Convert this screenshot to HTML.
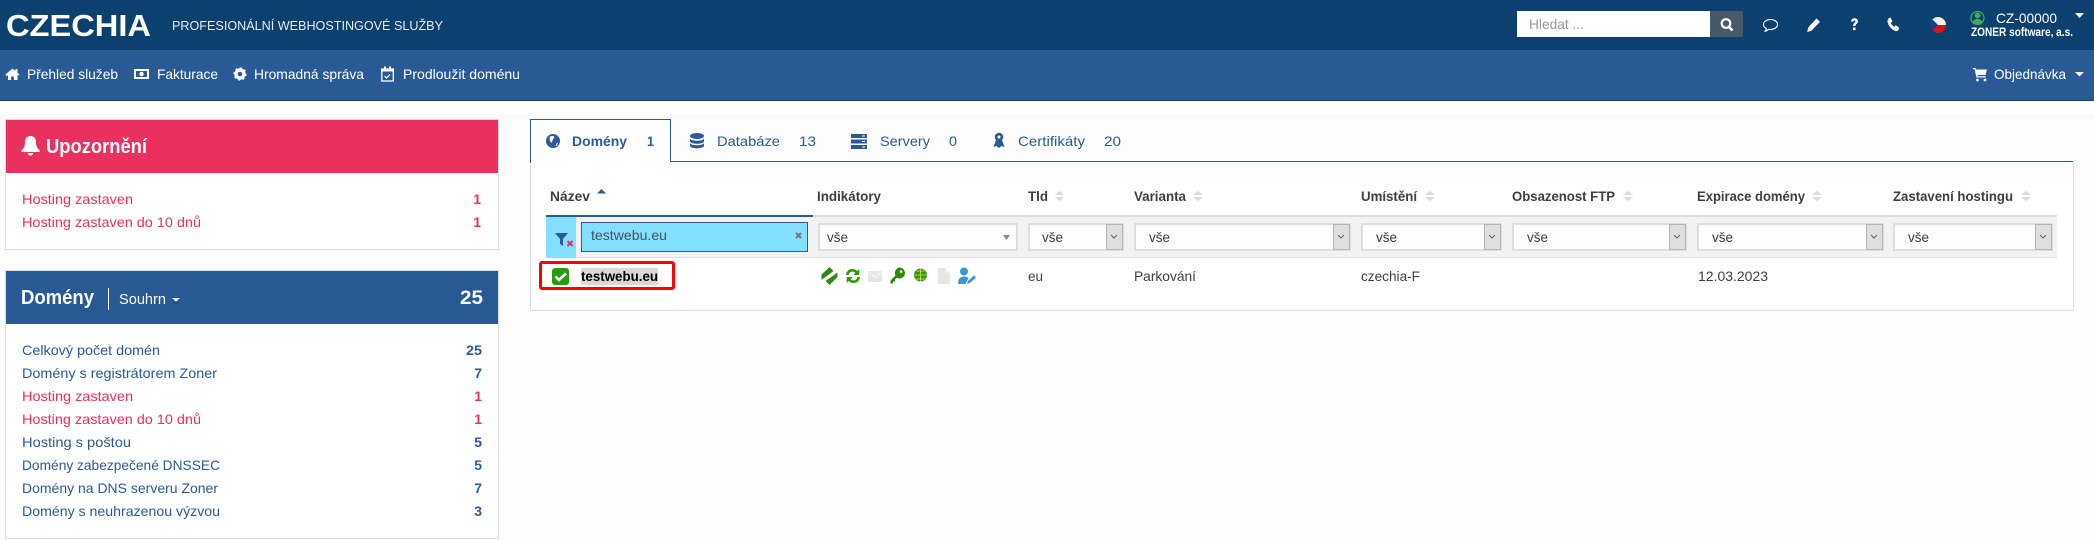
<!DOCTYPE html>
<html lang="cs"><head><meta charset="utf-8"><title>CZECHIA</title>
<style>
html,body{margin:0;padding:0;background:#fff;width:2094px;height:540px;overflow:hidden}
svg{display:block}
text{font-family:"Liberation Sans",Arial,sans-serif;font-size:14px;white-space:pre}
.w{fill:#fff}.b{fill:#2b5a96}.r{fill:#e9305e}.h{fill:#3c4045;font-weight:bold}.d{fill:#3c4045}
.n{font-weight:bold}
.sel{fill:#fcfcfc;stroke:#dedede;stroke-width:2}
.btn{fill:#dfdfdf;stroke:#b4b4b4;stroke-width:1}
.chev{fill:none;stroke:#666;stroke-width:1}
.so{fill:#dcdcdc}
</style></head><body>
<svg xmlns="http://www.w3.org/2000/svg" width="2094" height="540" viewBox="0 0 2094 540">
<rect width="2094" height="540" fill="#fcfcfc"/>
<rect y="100" width="2094" height="14" fill="#fff"/>
<!-- top bar -->
<rect width="2094" height="50" fill="#0b406f"/>
<rect y="50" width="2094" height="50" fill="#2a5a96"/>
<rect y="100" width="2094" height="1" fill="#0b406f"/>
<text x="6" y="36" class="w" style="font-size:31px;font-weight:bold" textLength="145" lengthAdjust="spacingAndGlyphs">CZECHIA</text>
<text x="172" y="30" class="w" style="font-size:13px;fill:#e4ebf3" textLength="271" lengthAdjust="spacingAndGlyphs">PROFESIONÁLNÍ WEBHOSTINGOVÉ SLUŽBY</text>
<!-- search -->
<rect x="1517" y="11" width="193" height="26" fill="#fff"/>
<text x="1529" y="29" style="fill:#999" textLength="55" lengthAdjust="spacingAndGlyphs">Hledat ...</text>
<rect x="1710" y="11" width="33" height="26" fill="#46586a"/>
<circle cx="1726" cy="23.5" r="4.3" fill="none" stroke="#fff" stroke-width="2.2"/>
<path d="M1729 27l3.5 3.5" stroke="#fff" stroke-width="2.6" fill="none"/>
<!-- top icons -->
<path d="M1770.500 19.500c4 0 7 2.200 7 5s-3 5-7 5c-.8 0-1.400-.1-2-.2-.8 1-2 1.700-3.400 1.900.7-.8 1.200-1.700 1.300-2.700-1.800-.9-2.900-2.300-2.900-4 0-2.800 3-5 7-5z" fill="none" stroke="#fff" stroke-width="1.100"/>
<path d="M1816.500 18.500l3.500 3.200-8.500 9-4.300 1.300 1-4.500z" fill="#fff"/>
<path d="M1851 21.500c.3-2.300 1.700-3.300 3.500-3.300 2 0 3.500 1.300 3.500 3.100 0 2.400-2.500 2.600-2.500 4.700h-2.400c0-3.100 2.400-3.200 2.400-4.500 0-.6-.4-1-1-1-.7 0-1.100.5-1.200 1.300zM1853 27.500h2.500v2.600H1853z" fill="#fff"/>
<path d="M1888 18.500l2.500-1 2 4-1.700 1.300c.5 1.700 2 3.300 3.500 4l1.500-1.500 3.500 2.500-1 2.500c-.6.800-1.800 1-2.800.7-4-1.300-7.500-5.500-8-9.500-.1-1.100.4-2 1.500-2.500z" fill="#fff"/>
<clipPath id="fc"><circle cx="1938" cy="25" r="8"/></clipPath>
<g clip-path="url(#fc)"><rect x="1930" y="17" width="16" height="8" fill="#f2f2f2"/><rect x="1930" y="25" width="16" height="8" fill="#d7141a"/><path d="M1930 17l8 8-8 8z" fill="#1b3f7d"/></g>
<circle cx="1977.500" cy="18" r="6.500" fill="#0b406f" stroke="#43a85a" stroke-width="1.300"/>
<circle cx="1977.500" cy="15.500" r="2.900" fill="#43a85a"/>
<path d="M1972.500 22.500c.5-2.500 2.500-3.500 5-3.500s4.500 1 5 3.500c-1.300 1.300-3 2-5 2s-3.700-.7-5-2z" fill="#43a85a"/>
<text x="1996" y="23" class="w" textLength="61" lengthAdjust="spacingAndGlyphs">CZ-00000</text>
<path d="M2075 13h9l-4.500 5z" fill="#fff"/>
<text x="1971" y="36" class="w" style="font-size:12px;font-weight:bold" textLength="102" lengthAdjust="spacingAndGlyphs">ZONER software, a.s.</text>
<!-- nav -->
<path d="M5.500 74.500l7-6 3 2.500v-2h2v3.700l2 1.800-1 1-1-.7V80h-3.600v-3.500h-2.800V80H8v-4.700l-1.500.7z" fill="#fff"/>
<text x="27" y="79" class="w" textLength="91" lengthAdjust="spacingAndGlyphs">Přehled služeb</text>
<rect x="134" y="69" width="15" height="10" fill="#fff"/><rect x="136" y="71" width="11" height="6" fill="#2a5a96"/><circle cx="141.500" cy="74" r="2.200" fill="#fff"/>
<text x="157" y="79" class="w" textLength="61" lengthAdjust="spacingAndGlyphs">Fakturace</text>
<circle cx="240" cy="74" r="4" fill="none" stroke="#fff" stroke-width="3.400"/><circle cx="240" cy="74" r="5.800" fill="none" stroke="#fff" stroke-width="1.600" stroke-dasharray="2 2.500"/>
<text x="254" y="79" class="w" textLength="110" lengthAdjust="spacingAndGlyphs">Hromadná správa</text>
<rect x="381.800" y="69" width="11.500" height="12" fill="none" stroke="#fff" stroke-width="1.300"/><rect x="381" y="69" width="13" height="2.500" fill="#fff"/><rect x="384" y="66.500" width="2" height="3" fill="#fff"/><rect x="389" y="66.500" width="2" height="3" fill="#fff"/><path d="M384.500 76l2 2 3.500-3.500" stroke="#fff" fill="none" stroke-width="1.200"/>
<text x="403" y="79" class="w" textLength="117" lengthAdjust="spacingAndGlyphs">Prodloužit doménu</text>
<path d="M1973 68h2.500l.5 1.500h11l-1.500 5.500h-8l.3 1.200h8v1.300h-9.300l-2-8.200H1973z" fill="#fff"/><circle cx="1977.500" cy="80" r="1.400" fill="#fff"/><circle cx="1985" cy="80" r="1.400" fill="#fff"/>
<text x="1994" y="79" class="w" textLength="72" lengthAdjust="spacingAndGlyphs">Objednávka</text>
<path d="M2075 72h9l-4.500 4.500z" fill="#fff"/>
<!-- upozorneni panel -->
<rect x="5.500" y="119.500" width="493" height="130" fill="#fff" stroke="#ddd"/>
<rect x="6" y="120" width="492" height="53" fill="#e9305e"/>
<path d="M30.500 136c3.400 0 5.500 2.500 5.500 6 0 4.500 1.500 6.500 3.700 8.500v1.500H21.300v-1.500c2.200-2 3.700-4 3.700-8.500 0-3.500 2.100-6 5.500-6zM27.800 153h5.400c-.2 1.500-1.300 2.500-2.700 2.500s-2.500-1-2.700-2.500z" fill="#fff"/>
<text x="46" y="153" class="w" style="font-size:20px;font-weight:bold" textLength="101" lengthAdjust="spacingAndGlyphs">Upozornění</text>
<text x="22" y="204" class="r" textLength="111" lengthAdjust="spacingAndGlyphs">Hosting zastaven</text>
<text x="22" y="227" class="r" textLength="179" lengthAdjust="spacingAndGlyphs">Hosting zastaven do 10 dnů</text>
<text x="481" y="204" class="r n" text-anchor="end">1</text>
<text x="481" y="227" class="r n" text-anchor="end">1</text>
<!-- domeny panel -->
<rect x="5.500" y="270.500" width="493" height="268" fill="#fff" stroke="#ddd"/>
<rect x="6" y="271" width="492" height="53" fill="#295995"/>
<text x="21" y="304" class="w" style="font-size:20px;font-weight:bold" textLength="73" lengthAdjust="spacingAndGlyphs">Domény</text>
<rect x="108" y="288" width="1" height="22" fill="#fff"/>
<text x="119" y="304" class="w" style="font-size:15px" textLength="47" lengthAdjust="spacingAndGlyphs">Souhrn</text>
<path d="M172 298h8l-4 3.500z" fill="#fff"/>
<text x="483" y="304" class="w" style="font-size:19px;font-weight:bold" text-anchor="end" textLength="23" lengthAdjust="spacingAndGlyphs">25</text>
<g>
<text x="22" y="355" class="b" textLength="138" lengthAdjust="spacingAndGlyphs">Celkový počet domén</text>
<text x="22" y="378" class="b" textLength="195" lengthAdjust="spacingAndGlyphs">Domény s registrátorem Zoner</text>
<text x="22" y="401" class="r" textLength="111" lengthAdjust="spacingAndGlyphs">Hosting zastaven</text>
<text x="22" y="424" class="r" textLength="179" lengthAdjust="spacingAndGlyphs">Hosting zastaven do 10 dnů</text>
<text x="22" y="447" class="b" textLength="109" lengthAdjust="spacingAndGlyphs">Hosting s poštou</text>
<text x="22" y="470" class="b" textLength="198" lengthAdjust="spacingAndGlyphs">Domény zabezpečené DNSSEC</text>
<text x="22" y="493" class="b" textLength="196" lengthAdjust="spacingAndGlyphs">Domény na DNS serveru Zoner</text>
<text x="22" y="516" class="b" textLength="198" lengthAdjust="spacingAndGlyphs">Domény s neuhrazenou výzvou</text>
<text x="482" y="355" class="b n" text-anchor="end" textLength="16" lengthAdjust="spacingAndGlyphs">25</text>
<text x="482" y="378" class="b n" text-anchor="end">7</text>
<text x="482" y="401" class="r n" text-anchor="end">1</text>
<text x="482" y="424" class="r n" text-anchor="end">1</text>
<text x="482" y="447" class="b n" text-anchor="end">5</text>
<text x="482" y="470" class="b n" text-anchor="end">5</text>
<text x="482" y="493" class="b n" text-anchor="end">7</text>
<text x="482" y="516" class="b n" text-anchor="end">3</text>
</g>
<!-- main panel -->
<rect x="530.500" y="161.500" width="1543" height="149" fill="#fff" stroke="#ddd"/>
<path d="M530.500 162V119.500H670.500V161.500H2073" fill="#fff" stroke="#2a5a96"/>
<path d="M531 162h139v-1H531z" fill="#fff"/>
<rect x="531" y="120" width="139" height="43" fill="#fff"/>
<rect x="530" y="119" width="1" height="44" fill="#2a5a96"/>
<circle cx="553" cy="141" r="7" fill="#2b5a96"/><path d="M550 136.500c1.500-.7 3-.7 4 0 .8.800-.4 2-1.200 3.200-.8 1.300-.5 3-1.500 2.800-1.200-.3-2.300-3.500-1.300-6zM556.500 143.500l1.500-1-1 3-1.500 1z" fill="#fff"/>
<text x="572" y="146" class="b n" textLength="55" lengthAdjust="spacingAndGlyphs">Domény</text>
<text x="647" y="146" class="b n" textLength="7" lengthAdjust="spacingAndGlyphs">1</text>
<g fill="#2b5a96"><ellipse cx="697" cy="136" rx="7" ry="3"/><path d="M690 138.500c1 3 13 3 14 0v3c-1 3-13 3-14 0zM690 143c1 3 13 3 14 0v3c-1 3-13 3-14 0z"/></g>
<text x="717" y="146" class="b" textLength="63" lengthAdjust="spacingAndGlyphs">Databáze</text>
<text x="799" y="146" class="b" textLength="17" lengthAdjust="spacingAndGlyphs">13</text>
<g fill="#2b5a96"><rect x="851" y="134" width="16" height="4"/><rect x="851" y="139.500" width="16" height="4"/><rect x="851" y="145" width="16" height="4"/></g>
<g fill="#fff"><rect x="862" y="135.500" width="3" height="1"/><rect x="862" y="141" width="3" height="1"/><rect x="862" y="146.500" width="3" height="1"/></g>
<text x="880" y="146" class="b" textLength="50" lengthAdjust="spacingAndGlyphs">Servery</text>
<text x="949" y="146" class="b" textLength="8" lengthAdjust="spacingAndGlyphs">0</text>
<circle cx="999" cy="137" r="4.300" fill="#2b5a96"/><circle cx="999" cy="137" r="1.500" fill="#fff"/><path d="M996 140l-2.500 7 3-1 2.500 2 2.500-2 3 1-2.500-7z" fill="#2b5a96"/>
<text x="1018" y="146" class="b" textLength="67" lengthAdjust="spacingAndGlyphs">Certifikáty</text>
<text x="1104" y="146" class="b" textLength="17" lengthAdjust="spacingAndGlyphs">20</text>
<!-- header -->
<g>
<text x="550" y="201" class="h" textLength="40" lengthAdjust="spacingAndGlyphs">Název</text>
<path d="M597 193.500l4.500-4.500 4.500 4.500z" fill="#2b5a96"/>
<text x="817" y="201" class="h" textLength="64" lengthAdjust="spacingAndGlyphs">Indikátory</text>
<text x="1028" y="201" class="h" textLength="20" lengthAdjust="spacingAndGlyphs">Tld</text>
<path class="so" d="M1055 195l4.500-4.500 4.500 4.500zM1055 197h9l-4.500 4.500z"/>
<text x="1134" y="201" class="h" textLength="52" lengthAdjust="spacingAndGlyphs">Varianta</text>
<path class="so" d="M1193 195l5-4.500 5 4.500zM1193 197h10l-5 4.500z"/>
<text x="1361" y="201" class="h" textLength="56" lengthAdjust="spacingAndGlyphs">Umístění</text>
<path class="so" d="M1425 195l5-4.500 5 4.500zM1425 197h10l-5 4.500z"/>
<text x="1512" y="201" class="h" textLength="103" lengthAdjust="spacingAndGlyphs">Obsazenost FTP</text>
<path class="so" d="M1623 195l5-4.500 5 4.500zM1623 197h10l-5 4.500z"/>
<text x="1697" y="201" class="h" textLength="108" lengthAdjust="spacingAndGlyphs">Expirace domény</text>
<path class="so" d="M1812 195l5-4.500 5 4.500zM1812 197h10l-5 4.500z"/>
<text x="1893" y="201" class="h" textLength="120" lengthAdjust="spacingAndGlyphs">Zastavení hostingu</text>
<path class="so" d="M2021 195l5-4.500 5 4.500zM2021 197h10l-5 4.500z"/>
</g>
<!-- filter row -->
<rect x="546" y="215" width="1511" height="43" fill="#f2f2f2"/>
<rect x="546" y="215" width="1511" height="2" fill="#dcdcdc"/>
<rect x="546" y="257" width="1511" height="1" fill="#dcdcdc"/>
<rect x="546" y="215" width="267" height="2" fill="#2a5a96"/>
<rect x="546" y="217" width="30" height="41" fill="#84e0ff"/>
<path d="M555 233h13l-5 6v7l-3-2v-5z" fill="#2b5a96"/>
<path d="M567.500 241l5 5m0-5l-5 5" stroke="#e9305e" stroke-width="2" fill="none"/>
<rect x="581.500" y="222.500" width="226" height="29" fill="#84e0ff" stroke="#2a5a96"/>
<text x="591" y="240" style="fill:#44535f" textLength="76" lengthAdjust="spacingAndGlyphs">testwebu.eu</text>
<path d="M796 233l5 5m0-5l-5 5" stroke="#777" stroke-width="2" fill="none"/>
<rect x="819" y="224" width="198" height="26" class="sel"/>
<text x="827" y="242" class="d" textLength="21" lengthAdjust="spacingAndGlyphs">vše</text>
<path d="M1003 235h7l-3.500 5z" fill="#888"/>
<g>
<rect x="1029" y="224" width="94" height="26" class="sel"/><rect x="1106.500" y="224.500" width="16" height="25" class="btn"/><path class="chev" d="M1111 235l3 3 3-3"/><text x="1042" y="242" class="d" textLength="21" lengthAdjust="spacingAndGlyphs">vše</text>
<rect x="1135" y="224" width="215" height="26" class="sel"/><rect x="1333.500" y="224.500" width="16" height="25" class="btn"/><path class="chev" d="M1338 235l3 3 3-3"/><text x="1149" y="242" class="d" textLength="21" lengthAdjust="spacingAndGlyphs">vše</text>
<rect x="1362" y="224" width="139" height="26" class="sel"/><rect x="1484.500" y="224.500" width="16" height="25" class="btn"/><path class="chev" d="M1489 235l3 3 3-3"/><text x="1376" y="242" class="d" textLength="21" lengthAdjust="spacingAndGlyphs">vše</text>
<rect x="1513" y="224" width="173" height="26" class="sel"/><rect x="1669.500" y="224.500" width="16" height="25" class="btn"/><path class="chev" d="M1674 235l3 3 3-3"/><text x="1527" y="242" class="d" textLength="21" lengthAdjust="spacingAndGlyphs">vše</text>
<rect x="1698" y="224" width="185" height="26" class="sel"/><rect x="1866.500" y="224.500" width="16" height="25" class="btn"/><path class="chev" d="M1871 235l3 3 3-3"/><text x="1712" y="242" class="d" textLength="21" lengthAdjust="spacingAndGlyphs">vše</text>
<rect x="1894" y="224" width="158" height="26" class="sel"/><rect x="2035.500" y="224.500" width="16" height="25" class="btn"/><path class="chev" d="M2040 235l3 3 3-3"/><text x="1908" y="242" class="d" textLength="21" lengthAdjust="spacingAndGlyphs">vše</text>
</g>
<!-- row -->
<rect x="540.500" y="262.500" width="133" height="26" rx="1.500" fill="none" stroke="#f00" stroke-width="3"/>
<rect x="552" y="268" width="17" height="17" rx="3" fill="#2c9a0c"/>
<path d="M555.500 276.500l3.500 3.500 7-6.500" fill="none" stroke="#fff" stroke-width="2.600"/>
<rect x="581" y="268" width="77" height="17" fill="#d9d9d9"/>
<text x="581" y="281" class="n" style="fill:#000" textLength="77" lengthAdjust="spacingAndGlyphs">testwebu.eu</text>
<!-- indicators -->
<path d="M829.500 267l4 4-12 9-0-5.500zM829.500 285l-4-4 12-8.500 0 4.500z" fill="#2e8b12"/>
<path d="M846 275c.5-4 3-6 6.500-6 2 0 3.500.7 4.800 2l2-2v6h-6l2-2c-.8-.9-1.800-1.400-2.900-1.400-2 0-3.300 1.200-3.700 3.400zM860 277c-.5 4-3 6-6.500 6-2 0-3.500-.7-4.800-2l-2 2v-6h6l-2 2c.8.900 1.800 1.400 2.900 1.400 2 0 3.300-1.200 3.700-3.400z" fill="#2c9a0c"/>
<rect x="868" y="271" width="14" height="11" fill="#e6e6e6"/><path d="M868 272l7 5 7-5" fill="none" stroke="#f6f6f6" stroke-width="1"/>
<path d="M899.500 267.500a5.500 5.500 0 1 1-2.700 10.300l-1.800 1.700v2h-2v2h-2.500v-3l5-5a5.500 5.500 0 0 1 4-8z" fill="#2c8a0c"/><circle cx="901" cy="271.500" r="1.300" fill="#fff"/>
<circle cx="920.500" cy="275" r="6.500" fill="#2c9a0c"/><path d="M914 275h13M920.500 268.500v13M916 271h9M916 279h9" stroke="#e8d94a" stroke-width=".8" fill="none"/>
<path d="M938 268h7.500l4.500 4.500V284h-12z" fill="#e6e6e6"/><path d="M945.500 268v4.500h4.500" fill="#f6f6f6"/>
<circle cx="964" cy="271.500" r="4" fill="#3b95d6"/><path d="M958 284c0-5 2-7.500 6-7.500 2 0 3.500.5 4.500 1.500l-3 6z" fill="#3b95d6"/><path d="M967 284l1-3 6-5.500 2 2-6 5.500z" fill="#3b95d6"/>
<text x="1028" y="281" class="d" textLength="15" lengthAdjust="spacingAndGlyphs">eu</text>
<text x="1134" y="281" class="d" textLength="62" lengthAdjust="spacingAndGlyphs">Parkování</text>
<text x="1361" y="281" class="d" textLength="59" lengthAdjust="spacingAndGlyphs">czechia-F</text>
<text x="1698" y="281" class="d" textLength="70" lengthAdjust="spacingAndGlyphs">12.03.2023</text>
</svg>
</body></html>
